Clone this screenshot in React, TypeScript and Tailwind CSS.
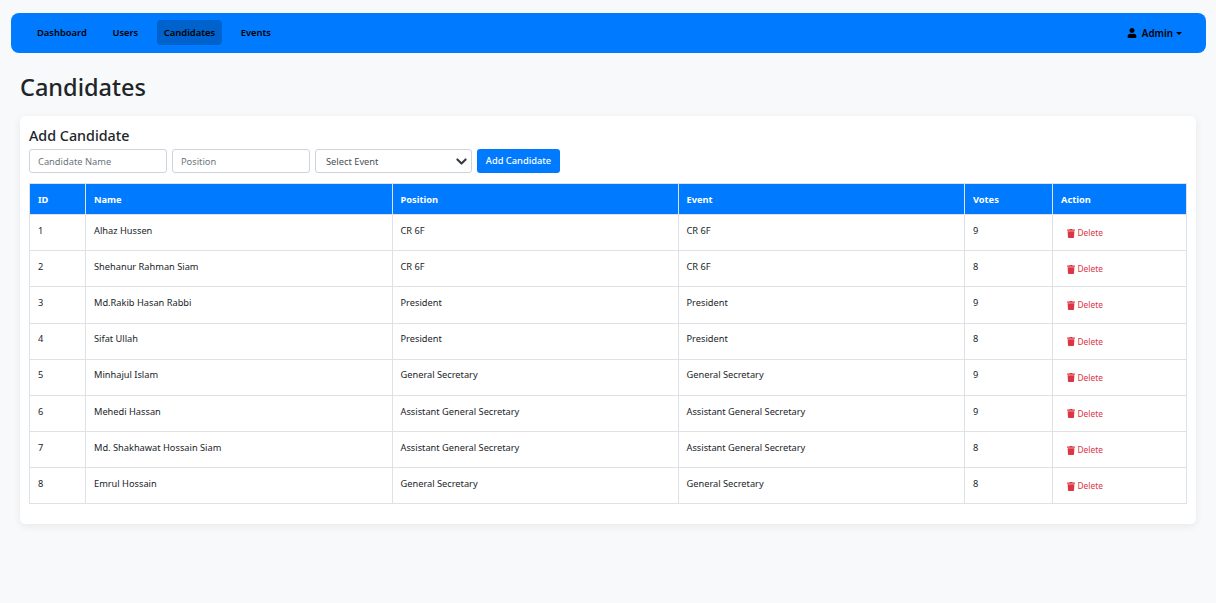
import { FaTrash, FaUser } from "react-icons/fa";

const candidates = [
  { id: 1, name: "Alhaz Hussen", position: "CR 6F", votes: 9 },
  { id: 2, name: "Shehanur Rahman Siam", position: "CR 6F", votes: 8 },
  { id: 3, name: "Md.Rakib Hasan Rabbi", position: "President", votes: 9 },
  { id: 4, name: "Sifat Ullah", position: "President", votes: 8 },
  { id: 5, name: "Minhajul Islam", position: "General Secretary", votes: 9 },
  { id: 6, name: "Mehedi Hassan", position: "Assistant General Secretary", votes: 9 },
  { id: 7, name: "Md. Shakhawat Hossain Siam", position: "Assistant General Secretary", votes: 8 },
  { id: 8, name: "Emrul Hossain", position: "General Secretary", votes: 8 },
];

const navItems = ["Dashboard", "Users", "Candidates", "Events"];
const headers = ["ID", "Name", "Position", "Event", "Votes", "Action"];

export default function App() {
  return (
    <div className="min-h-[603px] bg-[#f8f9fa] font-['Noto_Sans',sans-serif] text-[#212529] pt-[13px] px-[10px]">
      {/* Navbar */}
      <nav className="ml-px mr-0 h-10 w-[1195px] bg-[#007bff] rounded-lg flex items-center justify-between pl-[19px] pr-[24px]">
        <div className="flex items-center gap-[11.6px]">
          {navItems.map((item) => (
            <a
              key={item}
              className={`h-[25px] px-[7px] -mt-[2px] pt-[2px] flex items-center rounded-[4px] text-[9.4px] font-semibold text-black ${
                item === "Candidates" ? "bg-[#0062cc]" : ""
              }`}
            >
              {item}
            </a>
          ))}
        </div>
        <div className="flex items-center text-[9.8px] font-semibold text-black">
          <FaUser className="w-[10px] h-[10px] mr-[5px]" />
          <span className="leading-[14px] pt-px">Admin</span>
          <span className="ml-[3px] w-0 h-0 border-x-[3px] border-x-transparent border-t-[3px] border-t-black" />
        </div>
      </nav>

      <h1 className="ml-[10px] mt-[19px] text-[23.5px] leading-[30px] font-medium">Candidates</h1>

      {/* Card */}
      <div className="ml-[10px] mt-[14px] w-[1176px] h-[408px] bg-white rounded-[5px] shadow-[0_2px_8px_rgba(0,0,0,0.07)] pl-[9px] pt-[11px]">
        <h2 className="text-[14.3px] leading-[18px] font-medium">Add Candidate</h2>

        <div className="mt-[4px] flex items-start">
          <input
            placeholder="Candidate Name"
            className="w-[138px] h-6 mr-[5px] px-[8px] text-[9.3px] border border-[#ced4da] rounded-[3px] bg-white outline-none placeholder:text-[#6c757d]"
          />
          <input
            placeholder="Position"
            className="w-[138px] h-6 mr-[5px] px-[8px] text-[9.3px] border border-[#ced4da] rounded-[3px] bg-white outline-none placeholder:text-[#6c757d]"
          />
          <div className="relative w-[157px] h-6 mr-[5px] px-[10px] pt-px flex items-center text-[9.3px] text-[#495057] border border-[#ced4da] rounded-[3px] bg-white">
            Select Event
            <svg className="absolute right-[3px] top-[6px] w-[13px] h-[11px]" viewBox="0 0 16 16" fill="none">
              <path d="M2 5l6 6 6-6" stroke="#343a40" strokeWidth="3" strokeLinecap="round" strokeLinejoin="round" />
            </svg>
          </div>
          <button className="w-[83px] h-6 bg-[#007bff] text-white text-[9.3px] font-medium rounded-[3px] pb-px">
            Add Candidate
          </button>
        </div>

        {/* Table */}
        <table className="mt-[10px] w-[1157px] table-fixed border-collapse text-[9.25px]">
          <colgroup>
            <col className="w-14" />
            <col className="w-[307px]" />
            <col className="w-[286px]" />
            <col className="w-[286px]" />
            <col className="w-[88px]" />
            <col className="w-[134px]" />
          </colgroup>
          <thead>
            <tr className="h-[31px] bg-[#007bff] text-white">
              {headers.map((h, i) => (
                <th
                  key={h}
                  className={`border border-[#dee2e6] pr-2 pt-px text-left font-bold ${i === 2 || i === 3 ? "pl-[7.5px]" : "pl-2"}`}
                >
                  {h}
                </th>
              ))}
            </tr>
          </thead>
          <tbody>
            {candidates.map((c) => (
              <tr key={c.id} className="h-[36.18px]">
                <td className="border border-[#dee2e6] px-2 pt-[8.7px] pb-[12px] align-top leading-[14px]">{c.id}</td>
                <td className="border border-[#dee2e6] px-2 pt-[8.7px] pb-[12px] align-top leading-[14px]">{c.name}</td>
                <td className="border border-[#dee2e6] pl-[7.5px] pr-2 pt-[8.7px] pb-[12px] align-top leading-[14px]">{c.position}</td>
                <td className="border border-[#dee2e6] pl-[7.5px] pr-2 pt-[8.7px] pb-[12px] align-top leading-[14px]">{c.position}</td>
                <td className="border border-[#dee2e6] px-2 pt-[8.7px] pb-[12px] align-top leading-[14px]">{c.votes}</td>
                <td className="border border-[#dee2e6] px-2 pt-[11px] pb-[10px] align-top leading-[14px]">
                  <span className="ml-[6px] flex items-center text-[8.4px] text-[#dc3545]">
                    <FaTrash className="w-[8px] h-[9px] mr-[2.5px]" />
                    Delete
                  </span>
                </td>
              </tr>
            ))}
          </tbody>
        </table>
      </div>
    </div>
  );
}
